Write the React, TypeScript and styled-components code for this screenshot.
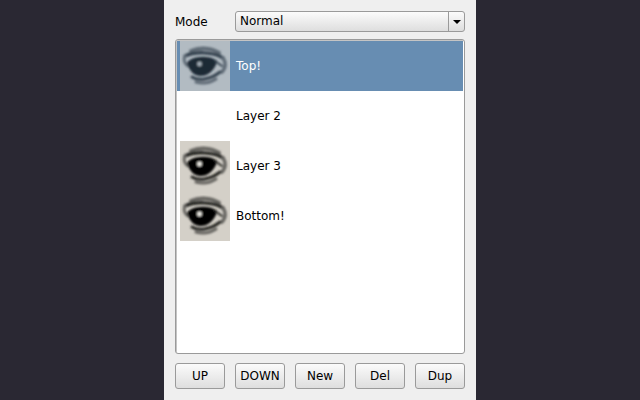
import styled, { createGlobalStyle } from "styled-components";

const GlobalStyle = createGlobalStyle`
  html, body {
    margin: 0;
    height: 100%;
    background: #2a2833;
  }
  #root {
    height: 100%;
  }
`;

type LayerItem = { name: string; visible: boolean; selected?: boolean };

const layers: LayerItem[] = [
  { name: "Top!", visible: true, selected: true },
  { name: "Layer 2", visible: false },
  { name: "Layer 3", visible: true },
  { name: "Bottom!", visible: true },
];

const buttons = ["UP", "DOWN", "New", "Del", "Dup"];

function EyeIcon({ selected, id }: { selected?: boolean; id: string }) {
  const ink = selected ? "#1c2936" : "#050505";
  const soft = selected ? "#364350" : "#252523";
  const pale = selected ? "#5f6b76" : "#666561";
  const glint = selected ? "#a3adb6" : "#efede6";
  return (
    <svg width="50" height="50" viewBox="0 0 50 50">
      <defs>
        <filter id={id} x="-10%" y="-10%" width="120%" height="120%">
          <feGaussianBlur stdDeviation="1.1" />
        </filter>
      </defs>
      <g filter={`url(#${id})`} fill="none" strokeLinecap="round">
        <path d="M11 10 C20 6 32 7 39 12" stroke={pale} strokeWidth="4" />
        <path d="M5 15 C14 11 32 10 43 17" stroke={soft} strokeWidth="3.5" />
        <path d="M5 15 C3 19 5 23 8 25" stroke={pale} strokeWidth="3" />
        <path d="M8 22 C12 16 27 15 36 20 C34 29 27 34 20 34 C14 34 10 28 8 22 Z" fill={ink} stroke={ink} strokeWidth="2" />
        <path d="M35 20 L42 25" stroke={soft} strokeWidth="2" />
        <path d="M43 17 C46 21 46 27 42 31" stroke={pale} strokeWidth="3.5" />
        <path d="M12 36 C18 40 30 39 40 31" stroke={soft} strokeWidth="3" />
        <path d="M16 41 C24 43 30 42 36 38" stroke={pale} strokeWidth="3" />
        <circle cx="19.5" cy="23" r="2.4" fill={glint} stroke="none" />
      </g>
    </svg>
  );
}

export default function App() {
  return (
    <Panel>
      <GlobalStyle />
      <ModeRow>
        <ModeLabel>Mode</ModeLabel>
        <Combo>
          <ComboText>Normal</ComboText>
          <ComboArrow />
        </Combo>
      </ModeRow>
      <LayerList>
        {layers.map((layer, i) => (
          <LayerRow key={layer.name} $selected={layer.selected}>
            <Thumb $visible={layer.visible} $selected={layer.selected}>
              {layer.visible && <EyeIcon selected={layer.selected} id={`eye-${i}`} />}
            </Thumb>
            <LayerName>{layer.name}</LayerName>
          </LayerRow>
        ))}
      </LayerList>
      <ButtonRow>
        {buttons.map((label) => (
          <ActionButton key={label}>{label}</ActionButton>
        ))}
      </ButtonRow>
    </Panel>
  );
}

const Panel = styled.main`
  box-sizing: border-box;
  width: 312px;
  height: 400px;
  margin: 0 auto;
  padding: 11px 11px 11px;
  display: flex;
  flex-direction: column;
  gap: 7px;
  background: #efefef;
  font-family: "DejaVu Sans", sans-serif;
  font-size: 12px;
  color: #000;
`;

const ModeRow = styled.div`
  display: flex;
  align-items: center;
  height: 21px;
`;

const ModeLabel = styled.span`
  width: 60px;
`;

const Combo = styled.div`
  box-sizing: border-box;
  flex: 1;
  height: 21px;
  display: flex;
  border: 1px solid #9a9a9a;
  border-radius: 3px;
  background: linear-gradient(#fbfbfb, #dedede);
`;

const ComboText = styled.span`
  flex: 1;
  padding-left: 4px;
  line-height: 19px;
`;

const ComboArrow = styled.span`
  width: 15px;
  border-left: 1px solid #9a9a9a;
  position: relative;

  &::after {
    content: "";
    position: absolute;
    left: 4px;
    top: 8px;
    border-left: 4px solid transparent;
    border-right: 4px solid transparent;
    border-top: 4px solid #000;
  }
`;

const LayerList = styled.div`
  box-sizing: border-box;
  flex: 1;
  padding: 1px;
  border: 1px solid #9a9a9a;
  border-radius: 3px;
  background: #fff;
  box-shadow: inset 1px 1px 0 #c4c4c4;
`;

const LayerRow = styled.div<{ $selected?: boolean }>`
  height: 50px;
  padding-left: 3px;
  display: flex;
  align-items: center;
  gap: 6px;
  background: ${(p) => (p.$selected ? "#678db2" : "transparent")};
  color: ${(p) => (p.$selected ? "#fff" : "#000")};
`;

const Thumb = styled.div<{ $visible: boolean; $selected?: boolean }>`
  width: 50px;
  height: 50px;
  background: ${(p) =>
    !p.$visible ? "transparent" : p.$selected ? "#b2bbc2" : "#d4d0c8"};
`;

const LayerName = styled.span``;

const ButtonRow = styled.div`
  display: flex;
  justify-content: space-between;
  margin-top: 2px;
`;

const ActionButton = styled.button`
  box-sizing: border-box;
  width: 50px;
  height: 26px;
  padding: 0;
  border: 1px solid #9a9a9a;
  border-radius: 3px;
  background: linear-gradient(#fbfbfb, #dedede);
  font: inherit;
  color: #000;
`;
